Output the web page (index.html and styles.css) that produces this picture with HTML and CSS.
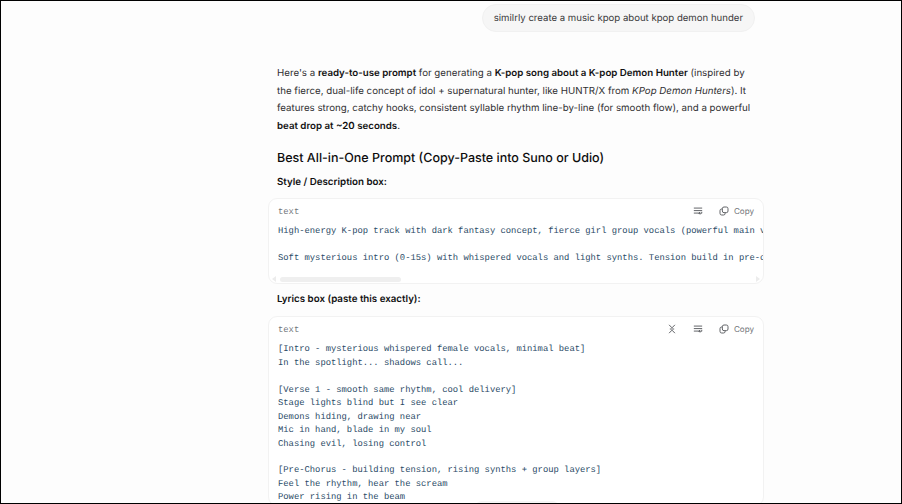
FILE: index.html
```html
<!DOCTYPE html>
<html lang="en">
<head>
<meta charset="utf-8">
<title>K-pop Demon Hunter prompt</title>
<link rel="stylesheet" href="styles.css">
</head>
<body>
<main class="thread">
  <div class="user-row"><div class="user-bubble">similrly create a music kpop about kpop demon hunder</div></div>
  <article class="answer">
    <p class="para">Here's a <b>ready-to-use prompt</b> for generating a <b>K-pop song about a K-pop Demon Hunter</b> (inspired by the fierce, dual-life concept of idol + supernatural hunter, like HUNTR/X from <i>KPop Demon Hunters</i>). It features strong, catchy hooks, consistent syllable rhythm line-by-line (for smooth flow), and a powerful <b>beat drop at ~20 seconds</b>.</p>
    <h2 class="heading">Best All-in-One Prompt (Copy-Paste into Suno or Udio)</h2>
    <p class="label">Style / Description box:</p>
    <section class="code-card">
      <div class="code-head">
        <span class="lang">text</span>
        <div class="tools">
          <svg class="icon" viewBox="0 0 12 12"><path d="M1 2.5h10M1 5.5h10M1 8.5h7.5M8.5 10.2 7 8.7l1.5-1.4M7.5 8.7h3V7"/></svg>
          <span class="copy"><svg class="icon" viewBox="0 0 12 12"><rect x="4" y="1.2" width="6.8" height="6.8" rx="2"/><path d="M4 3.6H3a2 2 0 0 0-1.8 2v3.2a2 2 0 0 0 2 2h2.2a2 2 0 0 0 2-2V8"/></svg>Copy</span>
        </div>
      </div>
      <pre class="code">High-energy K-pop track with dark fantasy concept, fierce girl group vocals (powerful main vocals, rap verses)

Soft mysterious intro (0-15s) with whispered vocals and light synths. Tension build in pre-chorus</pre>
      <div class="scrollbar">
        <span class="arrow arrow-left"></span>
        <span class="thumb"></span>
        <span class="arrow arrow-right"></span>
      </div>
    </section>
    <p class="label label-next">Lyrics box (paste this exactly):</p>
    <section class="code-card code-card-next">
      <div class="code-head">
        <span class="lang">text</span>
        <div class="tools">
          <svg class="icon" viewBox="0 0 12 12"><path d="M2.5 1 6 4.6 9.5 1M2.5 11 6 7.4l3.5 3.6M3.4 6h5.2"/></svg>
          <svg class="icon" viewBox="0 0 12 12"><path d="M1 2.5h10M1 5.5h10M1 8.5h7.5M8.5 10.2 7 8.7l1.5-1.4M7.5 8.7h3V7"/></svg>
          <span class="copy"><svg class="icon" viewBox="0 0 12 12"><rect x="4" y="1.2" width="6.8" height="6.8" rx="2"/><path d="M4 3.6H3a2 2 0 0 0-1.8 2v3.2a2 2 0 0 0 2 2h2.2a2 2 0 0 0 2-2V8"/></svg>Copy</span>
        </div>
      </div>
      <pre class="code">[Intro - mysterious whispered female vocals, minimal beat]
In the spotlight... shadows call...

[Verse 1 - smooth same rhythm, cool delivery]
Stage lights blind but I see clear
Demons hiding, drawing near
Mic in hand, blade in my soul
Chasing evil, losing control

[Pre-Chorus - building tension, rising synths + group layers]
Feel the rhythm, hear the scream
Power rising in the beam</pre>
    </section>
  </article>
</main>
<div class="float-pill"></div>
</body>
</html>
```

FILE: styles.css
```css
* { box-sizing: border-box; }
html, body { height: 100%; }
body {
  margin: 0;
  height: 504px;
  overflow: hidden;
  background: #fdfdfd;
  border: 1px solid #000;
  font-family: Inter, "Noto Sans", sans-serif;
  color: #1c1c1e;
  position: relative;
  text-rendering: geometricPrecision;
}
.thread {
  width: 496px;
  margin-left: 267px;
}
.user-row {
  display: flex;
  justify-content: flex-end;
  padding: 3px 9px 0 0;
}
.user-bubble {
  height: 28px;
  line-height: 27px;
  padding: 0 11px;
  border-radius: 14px;
  background: #f6f6f6;
  border: 1px solid #f1f1f1;
  font-size: 9.6px;
  color: #39393b;
  white-space: nowrap;
}
.answer { padding-top: 33px; }
.para {
  margin: 0;
  padding: 0 9px;
  font-size: 9.72px;
  line-height: 17.5px;
  color: #2f2f31;
}
.para b, .label { font-weight: 600; color: #111; }
.heading {
  margin: 14px 0 0;
  padding: 0 9px;
  font-size: 12.5px;
  line-height: 20px;
  font-weight: 500;
  color: #0d0d0d;
}
.label {
  margin: 5px 0 0;
  padding: 0 9px;
  font-size: 9.75px;
  line-height: 17px;
  font-weight: 600;
}
.label-next { margin-top: 7px; }
.code-card {
  margin-top: 7px;
  background: #fff;
  border: 1px solid #f2f2f2;
  border-radius: 9px;
  overflow: hidden;
}
.code-card-next { margin-top: 8px; }
.code-head {
  height: 26px;
  display: flex;
  justify-content: space-between;
  align-items: center;
  padding: 0 9px;
}
.code-card-next .code-head { padding-bottom: 1px; }
.lang {
  font-family: "Liberation Mono", monospace;
  font-size: 8.83px;
  color: #70757a;
}
.tools {
  display: flex;
  align-items: center;
  gap: 16px;
  padding-bottom: 2px;
}
.copy {
  display: flex;
  align-items: center;
  gap: 5px;
  font-size: 8.1px;
  color: #6f7378;
}
.icon {
  width: 10px;
  height: 10px;
  fill: none;
  stroke: #55585c;
  stroke-width: 1.1;
  flex: none;
}
.code {
  margin: 0;
  padding: 0 9px;
  font-family: "Liberation Mono", monospace;
  font-size: 8.83px;
  line-height: 13.45px;
  color: #2a4a66;
  overflow: hidden;
  white-space: pre;
}
.scrollbar {
  display: flex;
  align-items: center;
  height: 6px;
  margin-top: 11px;
  margin-bottom: 1px;
  padding: 0 3px;
}
.thumb {
  width: 121px;
  height: 5px;
  margin-left: 4px;
  border-radius: 3px;
  background: #efefef;
}
.arrow {
  width: 0;
  height: 0;
  border-style: solid;
  border-color: transparent;
}
.arrow-left {
  border-width: 3px 4px 3px 0;
  border-right-color: #ececec;
}
.arrow-right {
  margin-left: auto;
  border-width: 3px 0 3px 4px;
  border-left-color: #ececec;
}
.float-pill {
  position: absolute;
  left: 473px;
  bottom: -14px;
  width: 86px;
  height: 16px;
  border-radius: 12px;
  background: #f5f5f5;
}
```
